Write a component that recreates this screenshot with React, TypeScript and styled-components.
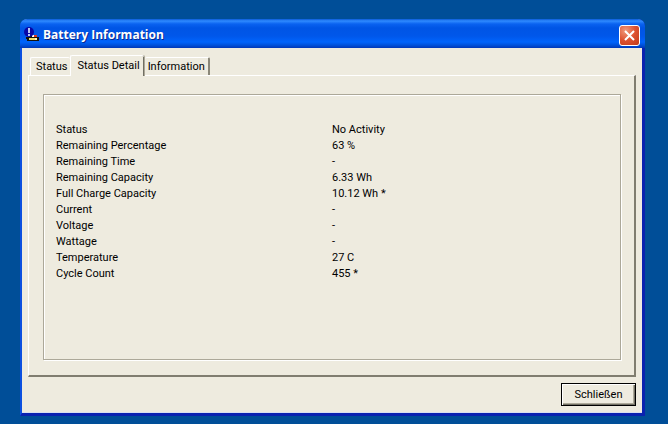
import { useState } from "react";
import styled, { createGlobalStyle } from "styled-components";

const GlobalStyle = createGlobalStyle`
    * {
        box-sizing: border-box;
    }

    body {
        margin: 0;
        background-color: #004e98;
        color: #000;
        font-family: Roboto, "Liberation Sans", sans-serif;
        font-size: 11px;
        line-height: 16px;
    }

    button {
        font: inherit;
        color: inherit;
    }
`

const Desktop = styled.main`
    display: flex;
    min-height: 100vh;
    padding: 19px 23px 8px 20px;
`

const Window = styled.section`
    display: flex;
    flex: 1;
    flex-direction: column;
    border: solid #0a22b0;
    border-width: 0 3px 3px 2px;
    border-left-color: #0c50e0;
    border-radius: 7px 7px 0 0;
    background-color: #eeebdf;
`

const TitleBar = styled.header`
    display: flex;
    align-items: center;
    height: 29px;
    margin: 0 -3px 0 -2px;
    padding: 3px 5px 0 4px;
    gap: 3px;
    border-radius: 7px 7px 0 0;
    background: linear-gradient(
        #0a5ad8 0,
        #2f8bff 2px,
        #0a62f0 5px,
        #0055e5 9px,
        #0057ea 17px,
        #0064fc 23px,
        #0052dc 26px,
        #0038b8 29px
    );
`

const Title = styled.h1`
    flex: 1;
    margin: 0;
    color: #fff;
    font-family: "Open Sans", sans-serif;
    font-size: 12px;
    font-weight: 700;
    text-shadow: 1px 1px 0 #0a2a90;
`

const CloseButton = styled.button`
    display: flex;
    align-items: center;
    justify-content: center;
    width: 21px;
    height: 21px;
    padding: 0;
    border: 1px solid #fff;
    border-radius: 3px;
    background: radial-gradient(circle at 30% 25%, #f09a7c, #dd5130 50%, #c03a18);
`

const Content = styled.div`
    display: flex;
    flex: 1;
    flex-direction: column;
    padding: 7px 6px 6px;
    border-bottom: 1px solid #d9e0f0;
`

const TabList = styled.div`
    display: flex;
    align-items: flex-end;
    padding-left: 2px;
`

const Tab = styled.button<{ $active: boolean }>`
    height: ${({ $active }) => ($active ? 21 : 18)}px;
    margin-bottom: ${({ $active }) => ($active ? -1 : 0)}px;
    padding: 1px 3px 0 5px;
    border: solid #fff;
    border-width: 1px 0 0 1px;
    border-radius: 2px 2px 0 0;
    background-color: #eeebdf;
    box-shadow: ${({ $active }) => ($active ? "inset -2px 0 0 -1px #716f64, 1px 0 0 #aca899" : "none")};

    ${({ $active }) => $active && "position: relative; padding: 0 4px 1px 6px;"}

    &:last-child {
        margin-left: 1px;
        padding: 1px 3px 0;
        border-left: 0;
        border-right: 2px solid #8a8779;
    }
`

const TabPanel = styled.div`
    display: flex;
    flex: 1;
    padding: 18px 13px 15px 14px;
    border: solid;
    border-width: 1px 2px 2px 1px;
    border-color: #fff #807d70 #807d70 #fff;
`

const DetailFrame = styled.div`
    flex: 1;
    padding: 27px 12px;
    border: 1px solid #aca899;
    box-shadow: 1px 1px 0 #fff, inset 1px 1px 0 #fff;
`

const DetailTable = styled.table`
    width: 100%;
    border-collapse: collapse;
    table-layout: fixed;

    th, td {
        padding: 0;
        font-weight: 400;
        text-align: left;
    }

    th {
        width: 50%;
    }
`

const Footer = styled.footer`
    display: flex;
    justify-content: flex-end;
    padding-top: 6px;
`

const DialogButton = styled.button`
    min-width: 75px;
    height: 23px;
    padding: 0 12px;
    border: 1px solid #000;
    background-color: #eeebdf;
    box-shadow: inset 1px 1px 0 #fff, inset -1px -1px 0 #716f64, inset -2px -2px 0 #aca899;
`

const details = [
    { label: "Status", value: "No Activity" },
    { label: "Remaining Percentage", value: "63 %" },
    { label: "Remaining Time", value: "-" },
    { label: "Remaining Capacity", value: "6.33 Wh" },
    { label: "Full Charge Capacity", value: "10.12 Wh *" },
    { label: "Current", value: "-" },
    { label: "Voltage", value: "-" },
    { label: "Wattage", value: "-" },
    { label: "Temperature", value: "27 C" },
    { label: "Cycle Count", value: "455 *" },
]

const tabs = ["Status", "Status Detail", "Information"]

function BatteryIcon() {
    return (
        <svg width="16" height="16" viewBox="0 0 16 16" aria-hidden="true">
            <path d="M2 10h4v-1h7v1h2v4H3v-2H2z" fill="#16130c" />
            <path d="M5 11h8v2H5z" fill="#f2df65" />
            <path d="M8 8h3v2H8z" fill="#fff" />
            <path d="M10 8h3v2h-3z" fill="#d93a20" />
            <path d="M11 11h2v2h-2z" fill="#fff7c9" />
            <circle cx="5" cy="5" r="5" fill="#0808a8" />
            <path d="M4 1h2v5H4zM4 7h2v2H4z" fill="#b9c6f5" />
        </svg>
    )
}

function CloseIcon() {
    return (
        <svg width="13" height="13" viewBox="0 0 13 13" aria-hidden="true">
            <path d="M2 2l9 9M11 2l-9 9" stroke="#fff" strokeWidth="2" />
        </svg>
    )
}

function App() {
    const [activeTab, setActiveTab] = useState("Status Detail")

    return (
        <Desktop>
            <GlobalStyle />
            <Window>
                <TitleBar>
                    <BatteryIcon />
                    <Title>Battery Information</Title>
                    <CloseButton aria-label="Close">
                        <CloseIcon />
                    </CloseButton>
                </TitleBar>

                <Content>
                    <TabList role="tablist">
                        {tabs.map((tab) => (
                            <Tab
                                key={tab}
                                role="tab"
                                aria-selected={tab === activeTab}
                                $active={tab === activeTab}
                                onClick={() => setActiveTab(tab)}
                            >
                                {tab}
                            </Tab>
                        ))}
                    </TabList>

                    <TabPanel role="tabpanel">
                        <DetailFrame>
                            <DetailTable>
                                <tbody>
                                    {details.map(({ label, value }) => (
                                        <tr key={label}>
                                            <th scope="row">{label}</th>
                                            <td>{value}</td>
                                        </tr>
                                    ))}
                                </tbody>
                            </DetailTable>
                        </DetailFrame>
                    </TabPanel>

                    <Footer>
                        <DialogButton>Schließen</DialogButton>
                    </Footer>
                </Content>
            </Window>
        </Desktop>
    )
}

export default App
